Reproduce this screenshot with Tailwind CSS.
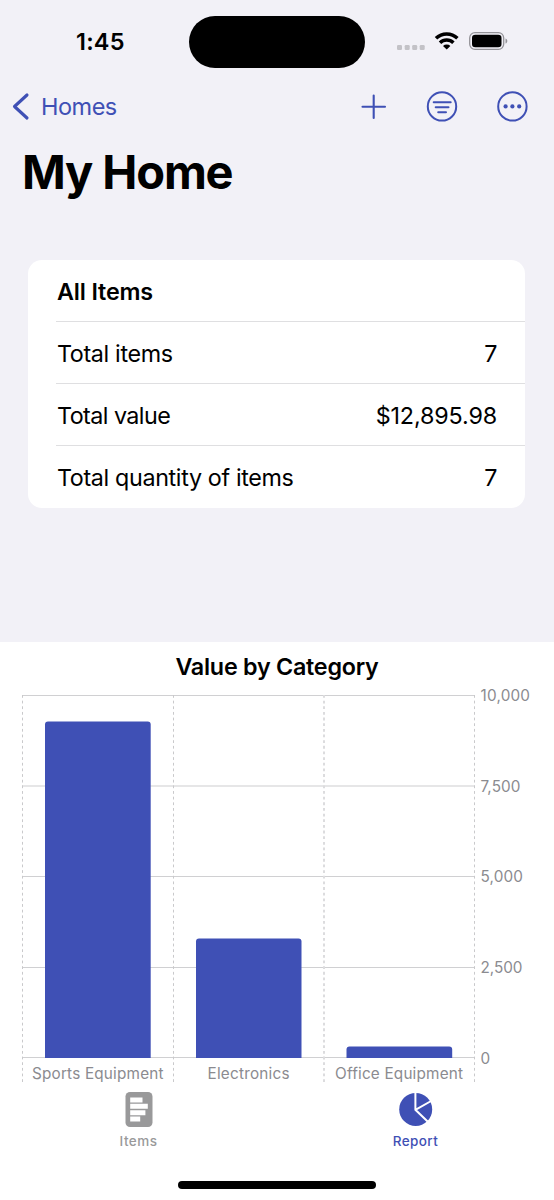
<!DOCTYPE html>
<html lang="en">
<head>
<meta charset="utf-8">
<title>My Home</title>
<script src="https://cdn.jsdelivr.net/npm/@tailwindcss/browser@4"></script>
</head>
<body class="bg-[#f2f1f7]">
<div class="flex h-[1200px] w-[554px] flex-col overflow-hidden font-['Inter',sans-serif] text-black">
  <!-- Status bar -->
  <header class="grid h-[84px] shrink-0 grid-cols-[189px_176px_189px]">
    <div class="pt-[27px] pl-[76px] text-[23.500px] leading-[30px] font-semibold tracking-[0.200px]">1:45</div>
    <div class="mt-[16px] h-[52px] rounded-full bg-black"></div>
    <div class="pt-[26px] pl-[31px]">
      <svg class="block h-[30px] w-[115px]" viewBox="396 26 115 30" fill="none">
        <g fill="#c3c2c7"><rect x="397" y="45" width="5" height="5" rx="1.3"/><rect x="404.700" y="45" width="5" height="5" rx="1.3"/><rect x="412.200" y="45" width="5" height="5" rx="1.3"/><rect x="419.700" y="45" width="5" height="5" rx="1.3"/></g>
        <g stroke="#000" stroke-width="3.500"><path d="M436 38.300a15.300 15.300 0 0 1 21.400 0"/><path d="M440 42.800a9.600 9.600 0 0 1 13.400 0"/></g>
        <path d="M446.700 49.500l-3.700-3.600a5.400 5.400 0 0 1 7.400 0z" fill="#000"/>
        <rect x="469.700" y="32.600" width="34" height="16.800" rx="5.300" stroke="#949398" stroke-width="1.300"/>
        <rect x="472" y="34.800" width="29.500" height="12.400" rx="3.300" fill="#000"/>
        <path d="M505.500 38.500c2.400.9 2.400 4.200 0 5.100z" fill="#949398"/>
      </svg>
    </div>
  </header>
  <!-- Navigation -->
  <nav class="flex h-[46px] shrink-0 items-center justify-between pr-[26px] pl-[12px] text-[#3f50b5]">
    <div class="flex items-center gap-[11px]">
      <svg class="h-[30px] w-[18px]" viewBox="0 0 18 30" fill="none" stroke="currentColor" stroke-width="3.100" stroke-linecap="round" stroke-linejoin="round"><path d="M15 3L2.500 14.500 15 26"/></svg>
      <span class="text-[23.500px] leading-[30px] tracking-[-0.500px]">Homes</span>
    </div>
    <div class="flex items-center gap-[38px]">
      <svg class="h-[32px] w-[30px]" viewBox="0 0 30 32" stroke="currentColor" stroke-width="2.100" stroke-linecap="round"><path d="M15.700 4.500v22.500M4.500 15.700h22.500"/></svg>
      <svg class="h-[32px] w-[32px]" viewBox="0 0 32 32" fill="none" stroke="currentColor" stroke-width="2" stroke-linecap="round"><circle cx="16" cy="15.400" r="14.200"/><path d="M7.700 11.200h17M9.700 16.200h12.800M12.200 21.200h7.800"/></svg>
      <svg class="h-[32px] w-[32px]" viewBox="0 0 32 32" fill="none" stroke="currentColor" stroke-width="2"><circle cx="16.400" cy="15.400" r="14.200"/><g fill="currentColor" stroke="none"><circle cx="9.600" cy="15.400" r="2.100"/><circle cx="16.400" cy="15.400" r="2.100"/><circle cx="23.200" cy="15.400" r="2.100"/></g></svg>
    </div>
  </nav>
  <h1 class="mt-[12px] ml-[22px] h-[60px] shrink-0 text-[47px] leading-[60px] font-bold tracking-[-1.150px]">My Home</h1>
  <!-- Summary card -->
  <section class="mx-[28px] mt-[58px] h-[248px] w-[497px] shrink-0 rounded-[14px] bg-white pl-[28px] text-[23.300px] leading-[30px] tracking-[-0.350px]">
    <div class="flex h-[62px] items-center border-b border-[#dfdfe1] pt-[2px] pr-[28px] pl-px font-semibold tracking-[-0.150px]">All Items</div>
    <div class="flex h-[62px] items-center justify-between border-b border-[#dfdfe1] pt-[2px] pr-[28px] pl-px"><span>Total items</span><span>7</span></div>
    <div class="flex h-[62px] items-center justify-between border-b border-[#dfdfe1] pt-[2px] pr-[28px] pl-px"><span class="tracking-[-0.550px]">Total value</span><span class="tracking-[-0.130px]">$12,895.98</span></div>
    <div class="flex h-[62px] items-center justify-between pt-[2px] pr-[28px] pl-px"><span>Total quantity of items</span><span>7</span></div>
  </section>
  <!-- Chart -->
  <main class="mt-[134px] flex flex-1 flex-col bg-white">
    <h2 class="h-[48px] pt-[10px] text-center text-[23.300px] leading-[30px] font-semibold tracking-[-0.240px]">Value by Category</h2>
    <svg class="block h-[394px] w-[554px] overflow-visible" viewBox="0 690 554 394">
      <g stroke="#d0d0d2"><path d="M22 695.500h453M22 876.500h453M22 967.500h453M22 1057.500h453"/><path d="M22 786h453" stroke="#e6e6e7" stroke-width="2"/></g>
      <g stroke="#c9c9cb" stroke-dasharray="2.800 2.850"><path d="M22.500 695v387M173.500 695v387M474.500 695v387"/><path d="M324 695v387" stroke="#dcdcde" stroke-width="2"/></g>
      <g fill="#3f50b5">
        <path d="M45 1058V724.500q0-3 3-3h99.700q3 0 3 3V1058z"/>
        <path d="M196 1058V941.500q0-3 3-3h99.500q3 0 3 3V1058z"/>
        <path d="M346.500 1058v-8.500q0-3 3-3h99.700q3 0 3 3v8.500z"/>
      </g>
      <g class="text-[15.300px]" fill="#8b8b90">
        <text x="480.500" y="700.500" textLength="49.500">10,000</text>
        <text x="480.500" y="791.500" textLength="40">7,500</text>
        <text x="480.500" y="882" textLength="42.500">5,000</text>
        <text x="480.500" y="973" textLength="42">2,500</text>
        <text x="480.500" y="1063.500">0</text>
        <text x="32" y="1078.500" textLength="131.500">Sports Equipment</text>
        <text x="207.500" y="1078.500" textLength="82">Electronics</text>
        <text x="335" y="1078.500" textLength="128">Office Equipment</text>
      </g>
    </svg>
    <!-- Tab bar -->
    <div class="grid h-[70px] grid-cols-2 text-[13.500px] leading-[18px] font-medium">
      <div class="flex flex-col items-center gap-[5px] pt-[7px] text-[#99999a]">
        <svg class="h-[36px] w-[28px]" viewBox="0 0 28 36"><rect x=".5" y="1" width="27" height="35" rx="4.500" fill="currentColor"/><path d="M5.200 6.500h12.300v5H5.200zM5.200 12.800h17.600v5H5.200zM5.200 19.200h15.200v5H5.200zM5.200 25.600h10v5h-10z" fill="#fff"/></svg>
        <span class="tracking-[0.450px]">Items</span>
      </div>
      <div class="flex flex-col items-center gap-[5px] pt-[7px] text-[#3f50b5]">
        <svg class="h-[36px] w-[34px]" viewBox="0 0 34 36"><circle cx="16.700" cy="18.400" r="16.500" fill="currentColor"/><path d="M16.400 0v18.800l13 12.500M16.400 18.800L33 9.500" fill="none" stroke="#fff" stroke-width="2"/></svg>
        <span class="tracking-[0.400px]">Report</span>
      </div>
    </div>
    <div class="mx-auto mt-[27px] h-[8px] w-[198px] rounded-full bg-black"></div>
  </main>
</div>
</body>
</html>
